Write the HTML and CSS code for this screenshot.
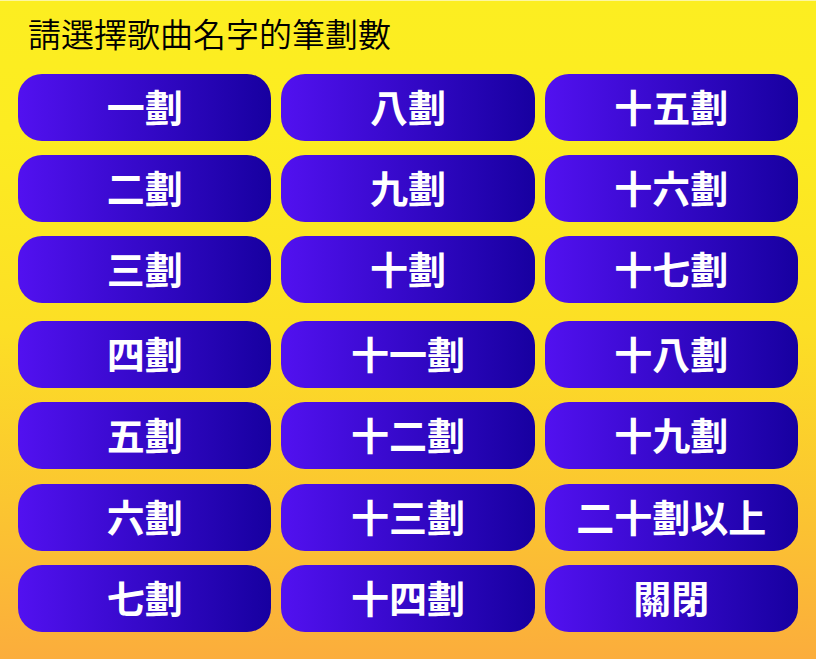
FILE: index.html
```html
<!DOCTYPE html>
<html lang="ko">
<head>
<meta charset="utf-8">
<meta name="viewport" content="width=device-width, initial-scale=1">
<title>請選擇歌曲名字的筆劃數</title>
<link rel="stylesheet" href="styles.css">
</head>
<body>
<main class="picker">
<h1 class="title">請選擇歌曲名字的筆劃數</h1>
<div class="choices">
<button class="choice" type="button">一劃</button>
<button class="choice" type="button">二劃</button>
<button class="choice" type="button">三劃</button>
<button class="choice" type="button">四劃</button>
<button class="choice" type="button">五劃</button>
<button class="choice" type="button">六劃</button>
<button class="choice" type="button">七劃</button>
<button class="choice" type="button">八劃</button>
<button class="choice" type="button">九劃</button>
<button class="choice" type="button">十劃</button>
<button class="choice" type="button">十一劃</button>
<button class="choice" type="button">十二劃</button>
<button class="choice" type="button">十三劃</button>
<button class="choice" type="button">十四劃</button>
<button class="choice" type="button">十五劃</button>
<button class="choice" type="button">十六劃</button>
<button class="choice" type="button">十七劃</button>
<button class="choice" type="button">十八劃</button>
<button class="choice" type="button">十九劃</button>
<button class="choice" type="button">二十劃以上</button>
<button class="choice" type="button">關閉</button>
</div>
</main>
</body>
</html>
```
FILE: styles.css
```css
* {
  box-sizing: border-box;
}

body {
  margin: 0;
  min-height: 100vh;
  border-top: 1px solid #fdf7a0;
  background: linear-gradient(#fcee21 0%, #fcec21 20%, #fcdf25 50%, #fbc232 80%, #fbad3c 100%);
  font-family: "Noto Sans CJK KR", "Noto Sans", sans-serif;
}

.picker {
  padding: 8px 18px 26px;
}

.title {
  margin: 0 0 16px;
  padding-left: 10px;
  color: #000;
  font-size: 33px;
  font-weight: 350;
  line-height: 49px;
}

.choices {
  display: grid;
  grid-template-columns: repeat(3, 1fr);
  grid-template-rows: repeat(2, 67px) 71px 67px 68px repeat(2, 67px);
  grid-auto-flow: column;
  gap: 14px 10px;
}

.choice {
  height: 67px;
  border: 0;
  border-radius: 24px;
  padding: 0 0 4px;
  background: linear-gradient(90deg, #5211f0, #1700a0);
  color: #fff;
  font: inherit;
  font-size: 38px;
  font-weight: 700;
  line-height: 56px;
}
```
